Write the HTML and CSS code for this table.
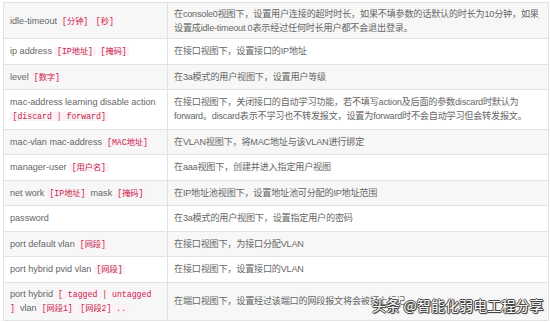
FILE: index.html
```html
<!DOCTYPE html>
<html lang="zh-CN">

<head>
    <meta charset="UTF-8">
    <meta name="viewport" content="width=device-width, initial-scale=1.0">
    <title>交换机命令</title>
    <link rel="stylesheet" href="styles.css">
</head>

<body>
    <div class="wrapper">
        <table class="cmdTable">
            <colgroup>
                <col class="cmdCol">
                <col>
            </colgroup>
            <tr>
                <td>idle-timeout <code>[分钟]</code> <code>[秒]</code></td>
                <td class="desc">在console0视图下，设置用户连接的超时时长，如果不填参数的话默认的时长为10分钟，如果设置成idle-timeout 0表示经过任何时长用户都不会退出登录。</td>
            </tr>
            <tr>
                <td>ip address <code>[IP地址]</code> <code>[掩码]</code></td>
                <td class="desc">在接口视图下，设置接口的IP地址</td>
            </tr>
            <tr>
                <td>level <code>[数字]</code></td>
                <td class="desc">在3a模式的用户视图下，设置用户等级</td>
            </tr>
            <tr>
                <td>mac-address learning disable action <code>[discard | forward]</code></td>
                <td class="desc">在接口视图下，关闭接口的自动学习功能，若不填写action及后面的参数discard时默认为forward。discard表示不学习也不转发报文，设置为forward时不会自动学习但会转发报文。</td>
            </tr>
            <tr>
                <td>mac-vlan mac-address <code>[MAC地址]</code></td>
                <td class="desc">在VLAN视图下，将MAC地址与该VLAN进行绑定</td>
            </tr>
            <tr>
                <td>manager-user <code>[用户名]</code></td>
                <td class="desc">在aaa视图下，创建并进入指定用户视图</td>
            </tr>
            <tr>
                <td>net work <code>[IP地址]</code> mask <code>[掩码]</code></td>
                <td class="desc">在IP地址池视图下，设置地址池可分配的IP地址范围</td>
            </tr>
            <tr>
                <td>password</td>
                <td class="desc">在3a模式的用户视图下，设置指定用户的密码</td>
            </tr>
            <tr>
                <td>port default vlan <code>[网段]</code></td>
                <td class="desc">在接口视图下，为接口分配VLAN</td>
            </tr>
            <tr>
                <td>port hybrid pvid vlan <code>[网段]</code></td>
                <td class="desc">在接口视图下，设置接口的VLAN</td>
            </tr>
            <tr class="lastRow">
                <td>port hybrid <code>[ tagged | untagged ]</code> vlan <code>[网段1]</code> <code>[网段2] ..</code></td>
                <td class="desc">在端口视图下，设置经过该端口的网段报文将会被打上标记</td>
            </tr>
        </table>
        <!-- 水印 -->
        <div class="watermark">头条 @智能化弱电工程分享</div>
    </div>
</body>

</html>
```

FILE: styles.css
```css
* {
    padding: 0px;
    margin: 0px;
}

body {
    background-color: #fff;
    font-family: "Liberation Sans", "Noto Sans CJK SC", sans-serif;
    font-size: 9.1px;
    line-height: 14px;
    color: #666;
}

.wrapper {
    position: relative;
    width: 550px;
    height: 322px;
    overflow: hidden;
    padding-top: 2px;
}

.cmdTable {
    margin-left: 3px;
    width: 546px;
    border-collapse: collapse;
    table-layout: fixed;
}

.cmdTable .cmdCol {
    width: 164px;
}

.cmdTable td {
    padding: 5.25px 6px;
    border: 1px solid #e2e2e2;
    vertical-align: middle;
}

.cmdTable .desc {
    letter-spacing: -0.2px;
}

.cmdTable tr:nth-child(odd) td {
    background-color: #f7f7f7;
}

.cmdTable tr:first-child td {
    padding-top: 3.5px;
    padding-bottom: 3.5px;
}

.cmdTable .lastRow td {
    padding-top: 4.5px;
    padding-bottom: 4.5px;
}

.cmdTable code {
    font-family: "Liberation Mono", "Noto Sans CJK SC", monospace;
    font-size: 8.2px;
    line-height: 1;
    color: #c7254e;
    background-color: #fbf2f5;
    padding: 0px 2.5px;
    border-radius: 2px;
}

.watermark {
    position: absolute;
    left: 372px;
    top: 296px;
    font-family: "Noto Sans CJK SC", sans-serif;
    font-size: 14px;
    line-height: 18px;
    color: #fff;
    letter-spacing: 0.1px;
    text-shadow: 1px 0 0 #444, -1px 0 0 #444, 0 1px 0 #444, 0 -1px 0 #444, 1px 1px 1px #333;
}
```
